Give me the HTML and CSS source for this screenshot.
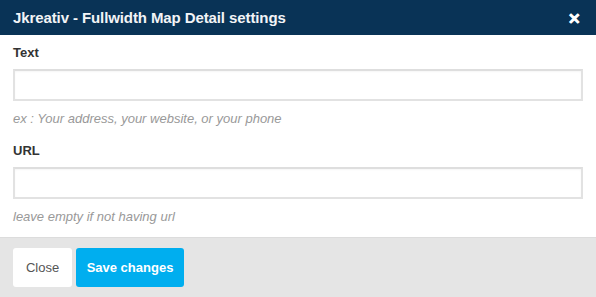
FILE: index.html
```html
<!DOCTYPE html>
<html>
<head>
<meta charset="utf-8">
<link rel="stylesheet" href="styles.css">
</head>
<body>
<div class="modal">
  <div class="header">
    <div class="title">Jkreativ - Fullwidth Map Detail settings</div>
    <div class="close">&#x2715;</div>
  </div>
  <div class="body">
    <div class="field">
      <label class="label">Text</label>
      <input class="input" type="text">
      <div class="hint">ex : Your address, your website, or your phone</div>
    </div>
    <div class="field">
      <label class="label">URL</label>
      <input class="input" type="text">
      <div class="hint">leave empty if not having url</div>
    </div>
  </div>
  <div class="footer">
    <button class="btn btn-close">Close</button>
    <button class="btn btn-save">Save changes</button>
  </div>
</div>
</body>
</html>
```
FILE: styles.css
```css
html, body {
  margin: 0;
  padding: 0;
  background: #fff;
}
body {
  font-family: "Liberation Sans", Arial, sans-serif;
  width: 596px;
  height: 297px;
  overflow: hidden;
}
.modal {
  display: flex;
  flex-direction: column;
  height: 297px;
}
.header {
  height: 35px;
  background: #093356;
  display: flex;
  align-items: center;
  justify-content: space-between;
  padding: 0 15px 0 13px;
  color: #fff;
}
.title {
  font-size: 15px;
  font-weight: bold;
  color: #f2f4f6;
  letter-spacing: -0.1px;
}
.close {
  font-size: 15px;
  font-weight: bold;
  color: #fff;
  margin-top: 2px;
  -webkit-text-stroke: 0.6px #fff;
}
.body {
  padding: 11px 13px 0 13px;
  height: 191px;
}
.field {
  display: flex;
  flex-direction: column;
}
.label {
  font-size: 13px;
  font-weight: bold;
  color: #333;
  height: 14px;
  line-height: 14px;
  margin-bottom: 9px;
}
.input {
  box-sizing: border-box;
  width: 570px;
  height: 32px;
  border: 2px solid #e2e2e2;
  border-top-color: #dedede;
  box-shadow: inset 0 1px 2px rgba(0,0,0,0.04);
  background: #fff;
  margin: 0;
  padding: 0 8px;
}
.hint {
  font-size: 13px;
  font-style: italic;
  color: #999;
  margin-top: 10px;
  line-height: 15px;
  margin-bottom: 18px;
}
.footer {
  flex: 1;
  background: #e5e5e5;
  border-top: 1px solid #dcdcdc;
  display: flex;
  align-items: flex-start;
  padding: 10px 13px 0 13px;
  gap: 4px;
}
.btn {
  font-family: "Liberation Sans", Arial, sans-serif;
  height: 39px;
  border: 0;
  border-radius: 3px;
  font-size: 13px;
  padding: 0;
  cursor: pointer;
}
.btn-close {
  width: 59px;
  background: #fff;
  color: #555;
}
.btn-save {
  width: 108px;
  background: #00aeef;
  color: #fff;
  font-weight: bold;
}
```
